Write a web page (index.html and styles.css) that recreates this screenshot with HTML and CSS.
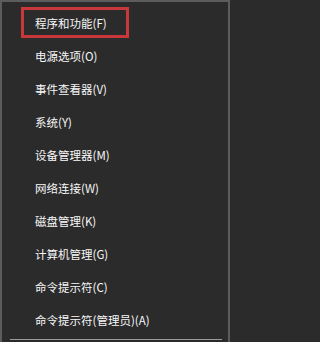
FILE: index.html
```html
<!DOCTYPE html>
<html lang="zh-CN">
<head>
<meta charset="utf-8">
<link rel="stylesheet" href="styles.css">
</head>
<body>
<div class="menu">
  <ul class="list">
    <li class="item"><span class="label hl">程序和功能(F)</span></li>
    <li class="item"><span class="label">电源选项(O)</span></li>
    <li class="item"><span class="label">事件查看器(V)</span></li>
    <li class="item"><span class="label">系统(Y)</span></li>
    <li class="item"><span class="label">设备管理器(M)</span></li>
    <li class="item"><span class="label">网络连接(W)</span></li>
    <li class="item"><span class="label">磁盘管理(K)</span></li>
    <li class="item"><span class="label">计算机管理(G)</span></li>
    <li class="item"><span class="label">命令提示符(C)</span></li>
    <li class="item"><span class="label">命令提示符(管理员)(A)</span></li>
  </ul>
  <div class="sep"></div>
</div>
</body>
</html>
```

FILE: styles.css
```css
html, body {
  margin: 0;
  padding: 0;
  background: #2b2b2b;
}
.menu {
  width: 230px;
  height: 342px;
  box-sizing: border-box;
  border-left: 2px solid #5c5c5c;
  border-top: 2px solid #5c5c5c;
  border-right: 2px solid #5c5c5c;
  background: #2b2b2b;
  font-family: "Noto Sans CJK SC", "Liberation Sans", sans-serif;
  font-size: 11.5px;
  color: #f7f7f7;
  overflow: hidden;
}
.list {
  list-style: none;
  margin: 0;
  padding: 4px 0 0 19px;
}
.item {
  height: 33px;
  display: flex;
  align-items: center;
}
.label {
  display: flex;
  align-items: center;
  height: 25px;
  padding: 0 19px 0 11px;
  border: 3px solid transparent;
  white-space: nowrap;
}
.label.hl {
  border-color: #c8383a;
}
.sep {
  margin: 3px 6px 0 8px;
  height: 1px;
  background: #9a9a9a;
}
```
